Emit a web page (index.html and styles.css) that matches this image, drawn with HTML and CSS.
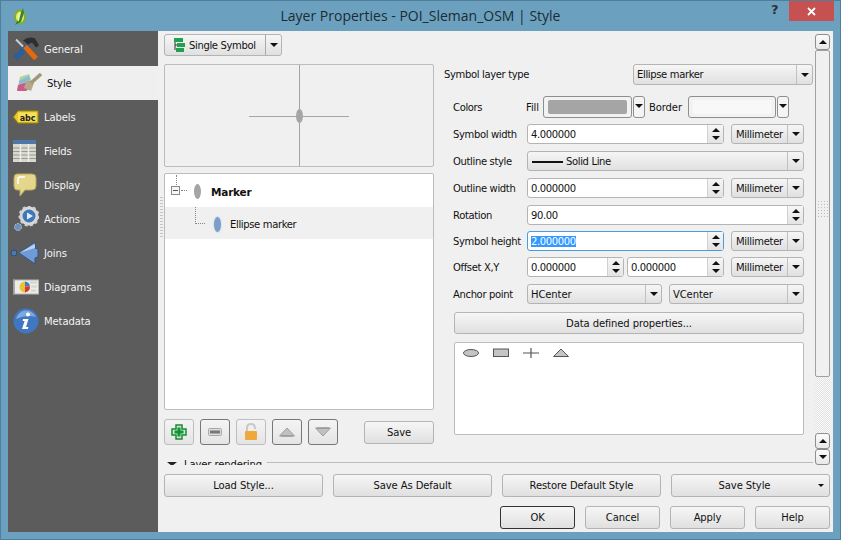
FILE: index.html
```html
<!DOCTYPE html>
<html lang="en">
<head>
  <meta charset="UTF-8">
  <title>Layer Properties - POI_Sleman_OSM | Style</title>
  <link rel="stylesheet" href="styles.css">
</head>
<body>
<div class="window">
  <div class="titlebar">
    <svg class="app-icon" width="16" height="20" viewBox="0 0 16 20"><ellipse cx="8" cy="10" rx="5" ry="6.5" fill="#e9ec6a" stroke="#8aa92e" stroke-width="2"/><path d="M11 1 L6 12 L3 18 L9 15 L12 6 Z" fill="#2f8a33"/><path d="M8 6 L6 14" stroke="#f3f5a0" stroke-width="1.5"/></svg>
    <div class="title">Layer Properties - POI_Sleman_OSM | Style</div>
    <div class="help">?</div>
    <div class="close"><svg width="9" height="9" viewBox="0 0 9 9"><path d="M1 1 L8 8 M8 1 L1 8" stroke="#fff" stroke-width="1.8"/></svg></div>
  </div>

  <div class="client">
    <div class="sidebar">
      <div class="nav-item">
        <svg class="nav-icon" width="26" height="25" viewBox="0 0 26 25"><path d="M1 1 L14 14" stroke="#d0d0d0" stroke-width="2"/><path d="M1 1 L3 3" stroke="#555" stroke-width="3"/><path d="M2 22 L16 8" stroke="#2b5f9c" stroke-width="5.5"/><path d="M12 10 L23 22" stroke="#e8680c" stroke-width="5"/><path d="M10 4 Q16 -1 22 2 L26 9 L23 11 L19 6 L15 8 Z" fill="#2e2e2e"/></svg>
        <span>General</span>
      </div>
      <div class="nav-item active">
        <svg class="nav-icon" width="26" height="20" viewBox="0 0 26 20"><path d="M1 18 L4 4 L13 1 L17 12 L10 18 Z" fill="#a8d49a"/><path d="M2 12 L14 8 L16 13 L10 18 L1 18 Z" fill="#c95c8a"/><path d="M3 8 L13 3 L14 7 L3 11 Z" fill="#8cb7dc"/><path d="M10 8 L18 10 L15 18 L8 15 Z" fill="#b3a88a"/><path d="M15 10 L25 1" stroke="#a09878" stroke-width="3.5"/></svg>
        <span>Style</span>
      </div>
      <div class="nav-item">
        <svg class="nav-icon" width="26" height="16" viewBox="0 0 26 16"><path d="M0.5 8 L5 2 H25 V14 H5 Z" fill="#eac926" stroke="#a58c10"/><rect x="5" y="3.5" width="18.5" height="9" fill="#f6e15a"/><text x="14.5" y="11.5" class="abc" text-anchor="middle">abc</text></svg>
        <span>Labels</span>
      </div>
      <div class="nav-item">
        <svg class="nav-icon" width="23" height="22" viewBox="0 0 23 22"><rect width="23" height="22" fill="#d8d8d0"/><rect width="23" height="4" fill="#4f78a8"/><path d="M0 8 H23 M0 11.5 H23 M0 15 H23 M0 18.5 H23" stroke="#9a9a90"/><path d="M7.5 4 V22 M15.5 4 V22" stroke="#f0f0ea" stroke-width="1.5"/></svg>
        <span>Fields</span>
      </div>
      <div class="nav-item">
        <svg class="nav-icon" width="24" height="24" viewBox="0 0 24 24"><path d="M4 1 H19 Q23 1 23 5 V13 Q23 17 19 17 H12 L7 23 V17 H4 Q1 17 1 13 V5 Q1 1 4 1 Z" fill="#e4d78c" stroke="#b8a85c"/><path d="M5 11 V6 Q5 4 7 4 H12" stroke="#fff" stroke-width="1.5" fill="none"/></svg>
        <span>Display</span>
      </div>
      <div class="nav-item">
        <svg class="nav-icon" width="26" height="26" viewBox="0 0 26 26"><circle cx="16" cy="10" r="8" fill="#3f78b8" stroke="#d8d8d8" stroke-width="3"/><circle cx="16" cy="10" r="9.5" fill="none" stroke="#cfcfcf" stroke-width="2" stroke-dasharray="3 2.4"/><path d="M14 6.5 L20 10 L14 13.5 Z" fill="#e8eef6"/><circle cx="5" cy="21" r="3.5" fill="#6f90b8" stroke="#b8c4d0" stroke-dasharray="2 1"/></svg>
        <span>Actions</span>
      </div>
      <div class="nav-item">
        <svg class="nav-icon wide" width="29" height="24" viewBox="0 0 29 24"><circle cx="4" cy="12" r="3" fill="#4a78b0" stroke="#2c4c78"/><path d="M9 12 L25 1 V7 L28 8 V16 L25 17 V23 Z" fill="#6f9ad6" stroke="#30547f"/><path d="M9 12 L25 7 V3 Z" fill="#b8d2f0"/></svg>
        <span>Joins</span>
      </div>
      <div class="nav-item">
        <svg class="nav-icon" width="26" height="17" viewBox="0 0 26 17"><rect x="0.5" y="1.5" width="25" height="14" fill="#ecece8" stroke="#b4b4ac"/><path d="M1 1 V16" stroke="#9a9a92" stroke-width="1.5"/><path d="M17 4 H24 M18 8 H24 M18 12 H23" stroke="#d4d4cc" stroke-width="2"/><path d="M12 3 A5.5 5.5 0 0 0 12 14 Z" fill="#e8c534"/><path d="M12 3 A5.5 5.5 0 0 1 17 8 H12 Z" fill="#4a78c0"/><path d="M12 8 H17 A5.5 5.5 0 0 1 12 14 Z" fill="#d6382c"/></svg>
        <span>Diagrams</span>
      </div>
      <div class="nav-item">
        <svg class="nav-icon" width="26" height="26" viewBox="0 0 26 26"><circle cx="13" cy="13" r="12.5" fill="#3f78c0"/><path d="M3 11 A10.5 10.5 0 0 1 23 9 Q13 6 3 11 Z" fill="#7ea8de"/><circle cx="15" cy="6.5" r="2" fill="#fff"/><path d="M10 11 H15.5 L13 19 H15.5 L14.8 21 H9 L11.6 13 H9.6 Z" fill="#fff"/></svg>
        <span>Metadata</span>
      </div>
    </div>

    <div class="main">
      <div class="splitter-dots"></div>
      <div class="scroll-area">
        <div class="scroll-content">
          <div class="columns">
            <div class="col-left">
              <div class="split-button">
                <div class="split-main">
                  <svg width="12" height="14" viewBox="0 0 12 14"><path d="M2 2 V12 M2 7 H6" stroke="#333"/><rect x="1" y="0" width="9" height="4" fill="#22a050"/><rect x="4" y="5" width="8" height="4" fill="#22a050"/><rect x="3" y="10" width="8" height="4" fill="#22a050"/></svg>
                  <span class="tight">Single Symbol</span>
                </div>
                <div class="split-arrow"><i class="caret"></i></div>
              </div>
              <div class="preview">
                <div class="cross-v"></div>
                <div class="cross-h"></div>
                <div class="dot"></div>
              </div>
              <div class="tree">
                <div class="tree-row">
                  <i class="dots-top"></i>
                  <i class="minus"></i>
                  <i class="dots-short"></i>
                  <i class="mark grey"></i>
                  <b>Marker</b>
                </div>
                <div class="tree-row sub">
                  <i class="dots-corner"></i>
                  <i class="mark blue"></i>
                  <span class="tight">Ellipse marker</span>
                </div>
              </div>
              <div class="tools">
                <button class="tool"><svg width="16" height="16" viewBox="0 0 16 16"><path d="M5 1 H11 V5 H15 V11 H11 V15 H5 V11 H1 V5 H5 Z" fill="#c8eccc" stroke="#1c8a30" stroke-width="1.5"/><path d="M8 3.5 V12.5 M3.5 8 H12.5" stroke="#12903a" stroke-width="3"/></svg></button>
                <button class="tool dark"><svg width="14" height="10" viewBox="0 0 14 10"><rect x="0.5" y="1.5" width="13" height="7" rx="1" fill="#dcdcdc" stroke="#a8a8a8"/><rect x="2" y="3.5" width="10" height="3" fill="#777"/></svg></button>
                <button class="tool"><svg width="14" height="18" viewBox="0 0 14 18"><path d="M3 8 V5 Q3 1 7 1 Q11 1 11 5 V6" fill="none" stroke="#c8c8c8" stroke-width="2"/><rect x="1" y="8" width="12" height="9" rx="1" fill="#eea83c"/></svg></button>
                <button class="tool dark"><svg width="18" height="10" viewBox="0 0 18 10"><path d="M9 1 L16.5 9 H1.5 Z" fill="#c0c0c0" stroke="#a0a0a0"/><path d="M3 9 H15" stroke="#888"/></svg></button>
                <button class="tool dark"><svg width="18" height="10" viewBox="0 0 18 10"><path d="M9 9 L16.5 1 H1.5 Z" fill="#c0c0c0" stroke="#a0a0a0"/><path d="M3 1 H15" stroke="#888"/></svg></button>
                <button class="btn tool-save">Save</button>
              </div>
            </div>

            <div class="col-right">
              <div class="type-row">
                <span class="tight">Symbol layer type</span>
                <div class="combo type-combo"><span class="tight">Ellipse marker</span><div class="combo-arrow"><i class="caret"></i></div></div>
              </div>
              <div class="form">
                <label class="colors-label">Colors</label>
                <div class="field colors">
                  <span class="fill-label">Fill</span>
                  <div class="color-btn"><div class="swatch grey"></div></div>
                  <div class="color-arrow"><i class="caret"></i></div>
                  <span class="border-label">Border</span>
                  <div class="color-btn border"><div class="swatch pale"></div></div>
                  <div class="color-arrow"><i class="caret"></i></div>
                </div>

                <label>Symbol width</label>
                <div class="field">
                  <div class="spin"><span>4.000000</span><div class="spin-btns"><i class="up"></i><i class="down"></i></div></div>
                  <div class="combo unit"><span>Millimeter</span><div class="combo-arrow"><i class="caret"></i></div></div>
                </div>

                <label>Outline style</label>
                <div class="field">
                  <div class="combo grow"><i class="solid-line"></i><span class="tight">Solid Line</span><div class="combo-arrow"><i class="caret"></i></div></div>
                </div>

                <label>Outline width</label>
                <div class="field">
                  <div class="spin"><span>0.000000</span><div class="spin-btns"><i class="up"></i><i class="down"></i></div></div>
                  <div class="combo unit"><span>Millimeter</span><div class="combo-arrow"><i class="caret"></i></div></div>
                </div>

                <label>Rotation</label>
                <div class="field">
                  <div class="spin"><span>90.00</span><div class="spin-btns"><i class="up"></i><i class="down"></i></div></div>
                </div>

                <label>Symbol height</label>
                <div class="field">
                  <div class="spin focused"><span><em>2.000000</em></span><div class="spin-btns"><i class="up"></i><i class="down"></i></div></div>
                  <div class="combo unit"><span>Millimeter</span><div class="combo-arrow"><i class="caret"></i></div></div>
                </div>

                <label>Offset X,Y</label>
                <div class="field offset">
                  <div class="spin"><span>0.000000</span><div class="spin-btns"><i class="up"></i><i class="down"></i></div></div>
                  <div class="spin"><span>0.000000</span><div class="spin-btns"><i class="up"></i><i class="down"></i></div></div>
                  <div class="combo unit"><span>Millimeter</span><div class="combo-arrow"><i class="caret"></i></div></div>
                </div>

                <label>Anchor point</label>
                <div class="field">
                  <div class="combo half"><span>HCenter</span><div class="combo-arrow"><i class="caret"></i></div></div>
                  <div class="combo half"><span>VCenter</span><div class="combo-arrow"><i class="caret"></i></div></div>
                </div>

                <button class="btn data-defined">Data defined properties...</button>

                <div class="shapes">
                  <svg width="112" height="14" viewBox="0 0 112 14"><ellipse cx="8" cy="7" rx="7.5" ry="3.5" fill="#c4c4c4" stroke="#555"/><rect x="30.5" y="3" width="15" height="7.5" fill="#c4c4c4" stroke="#555"/><path d="M60 7 H76 M68 2 V12" stroke="#555" stroke-width="1.2"/><path d="M90.5 10.5 L98 3 L105.5 10.5 Z" fill="#c4c4c4" stroke="#555"/></svg>
                </div>
              </div>
            </div>
          </div>

          <div class="rendering">
            <i class="rendering-arrow"></i>
            <span>Layer rendering</span>
            <i class="rendering-line"></i>
          </div>
        </div>

        <div class="scrollbar">
          <div class="sb-btn"><i class="up"></i></div>
          <div class="sb-handle"><div class="grip"></div></div>
          <div class="sb-trough"></div>
          <div class="sb-btn"><i class="up"></i></div>
          <div class="sb-btn"><i class="down"></i></div>
        </div>
      </div>

      <div class="actions">
        <button class="btn">Load Style...</button>
        <button class="btn">Save As Default</button>
        <button class="btn">Restore Default Style</button>
        <button class="btn menu">Save Style<i class="caret small"></i></button>
      </div>
      <div class="dialog-buttons">
        <button class="btn default">OK</button>
        <button class="btn">Cancel</button>
        <button class="btn">Apply</button>
        <button class="btn">Help</button>
      </div>
    </div>
  </div>
</div>
</body>
</html>
```

FILE: styles.css
```css
* {
  box-sizing: border-box;
}

html, body {
  margin: 0;
  padding: 0;
}

body {
  width: 841px;
  height: 540px;
  overflow: hidden;
  font-family: "DejaVu Sans", sans-serif;
  font-size: 10px;
  letter-spacing: -0.1px;
  color: #111;
}

i {
  display: block;
  font-style: normal;
}

.tight {
  letter-spacing: -0.35px;
}

.window {
  width: 841px;
  height: 540px;
  background: #6ba1be;
  border: 1px solid #4f7f9b;
  display: flex;
  flex-direction: column;
}

.titlebar {
  height: 30px;
  display: flex;
  align-items: flex-start;
  position: relative;
  flex-shrink: 0;
}

.app-icon {
  margin: 6px 0 0 11px;
}

.title {
  position: absolute;
  left: 0;
  right: 0;
  top: 5px;
  text-align: center;
  font-family: "Open Sans", sans-serif;
  font-size: 14px;
  letter-spacing: 0;
  color: #1d2b33;
}

.help {
  position: absolute;
  left: 770px;
  top: 1px;
  font-family: "DejaVu Sans", sans-serif;
  font-weight: bold;
  font-size: 13px;
  color: #2b3238;
}

.close {
  position: absolute;
  left: 788px;
  top: 0;
  width: 45px;
  height: 20px;
  background: #c75050;
  display: flex;
  align-items: center;
  justify-content: center;
}

.client {
  margin: 0 7px 7px 7px;
  height: 501px;
  display: flex;
}

/* left navigation */
.sidebar {
  width: 150px;
  padding-top: 1px;
  background: #5c5c5c;
  flex-shrink: 0;
}

.nav-item {
  height: 34px;
  position: relative;
  display: flex;
  align-items: center;
  padding-left: 36px;
  color: #f4f4f4;
}

.nav-item.active {
  background: #efefef;
  color: #111;
  padding-left: 39px;
}

.nav-icon {
  position: absolute;
  left: 5px;
  top: 50%;
  transform: translateY(-50%);
}

.nav-item.active .nav-icon {
  left: 8px;
}

.nav-icon.wide {
  left: 2px;
}

.abc {
  font-family: "DejaVu Sans", sans-serif;
  font-weight: bold;
  font-size: 8px;
  fill: #222;
}

/* main panel */
.main {
  flex: 1;
  min-width: 0;
  background: #f0f0f0;
  display: flex;
  flex-direction: column;
  position: relative;
}

.splitter-dots {
  position: absolute;
  left: 2px;
  top: 166px;
  width: 3px;
  height: 40px;
  background: repeating-linear-gradient(to bottom, #c4c4c4 0 1px, transparent 1px 3px);
}

.scroll-area {
  height: 434px;
  overflow: hidden;
  display: flex;
  flex-shrink: 0;
}

.scroll-content {
  width: 655px;
  padding-left: 6px;
}

.columns {
  display: flex;
  gap: 10px;
  height: 426px;
  padding-top: 3px;
}

.col-left {
  width: 270px;
  display: flex;
  flex-direction: column;
}

.split-button {
  width: 118px;
  height: 22px;
  display: flex;
  border: 1px solid #b4b4b4;
  border-radius: 3px;
  background: linear-gradient(#f6f6f6, #e0e0e0);
}

.split-main {
  flex: 1;
  display: flex;
  align-items: center;
  gap: 4px;
  padding-left: 8px;
}

.split-arrow {
  width: 16px;
  border-left: 1px solid #a8a8a8;
  display: flex;
  align-items: center;
  justify-content: center;
}

.caret {
  width: 0;
  height: 0;
  border-left: 4px solid transparent;
  border-right: 4px solid transparent;
  border-top: 4px solid #111;
}

.caret.small {
  border-left-width: 3px;
  border-right-width: 3px;
  border-top-width: 3px;
}

.preview {
  margin-top: 8px;
  height: 103px;
  border: 1px solid #bcbcbc;
  border-radius: 2px;
  position: relative;
}

.cross-v {
  position: absolute;
  left: 134px;
  top: 0;
  bottom: 0;
  width: 1px;
  background: #a5a5a5;
}

.cross-h {
  position: absolute;
  left: 84px;
  top: 51px;
  width: 100px;
  height: 1px;
  background: #a5a5a5;
}

.dot {
  position: absolute;
  left: 131px;
  top: 44px;
  width: 7px;
  height: 14px;
  border-radius: 50%;
  background: #a5a5a5;
}

.tree {
  margin-top: 6px;
  height: 237px;
  border: 1px solid #bcbcbc;
  border-radius: 2px;
  background: #fff;
  position: relative;
}

.tree-row {
  height: 33px;
  padding-top: 2px;
  position: relative;
  display: flex;
  align-items: center;
  padding-left: 46px;
}

.tree-row b {
  font-size: 10.5px;
  letter-spacing: -0.2px;
}

.tree-row.sub {
  height: 32px;
  padding-top: 2px;
  background: #f0f0f0;
  padding-left: 65px;
}

.dots-top {
  position: absolute;
  left: 11px;
  top: 1px;
  height: 10px;
  border-left: 1px dotted #888;
}

.minus {
  position: absolute;
  left: 6px;
  top: 12px;
  width: 9px;
  height: 9px;
  border: 1px solid #8a8a8a;
  background: linear-gradient(#555, #555) center / 5px 1px no-repeat, #f6f6f6;
}

.dots-short {
  position: absolute;
  left: 16px;
  top: 16px;
  width: 6px;
  border-top: 1px dotted #888;
}

.dots-corner {
  position: absolute;
  left: 30px;
  top: 0;
  width: 10px;
  height: 17px;
  border-left: 1px dotted #888;
  border-bottom: 1px dotted #888;
}

.mark {
  position: absolute;
  width: 7px;
  height: 15px;
  border-radius: 50%;
}

.mark.grey {
  left: 29px;
  top: 10px;
  background: #a5a5a5;
}

.mark.blue {
  left: 49px;
  top: 10px;
  background: #7c9fc6;
  box-shadow: 0 0 1px 1px #d0e2f4;
}

.tools {
  margin-top: 9px;
  display: flex;
  align-items: center;
  gap: 6px;
  height: 26px;
}

.tool {
  width: 30px;
  height: 26px;
  padding: 0;
  border: 1px solid #bdbdbd;
  border-radius: 3px;
  background: linear-gradient(#f4f4f4, #e4e4e4);
  display: flex;
  align-items: center;
  justify-content: center;
}

.tool.dark {
  border-color: #777;
}

.btn {
  height: 23px;
  padding: 0;
  border: 1px solid #b4b4b4;
  border-radius: 3px;
  background: linear-gradient(#f6f6f6, #e0e0e0);
  font-family: "DejaVu Sans", sans-serif;
  font-size: 10px;
  letter-spacing: -0.1px;
  color: #111;
}

.tool-save {
  width: 70px;
  margin-left: 20px;
}

.col-right {
  width: 369px;
  padding-top: 30px;
}

.type-row {
  height: 21px;
  display: flex;
  align-items: center;
  justify-content: space-between;
}

.combo {
  height: 20px;
  display: flex;
  align-items: center;
  position: relative;
  padding-left: 3px;
  border: 1px solid #b4b4b4;
  border-radius: 3px;
  background: linear-gradient(#f6f6f6, #e0e0e0);
}

.type-combo {
  width: 180px;
  height: 21px;
}

.combo-arrow {
  position: absolute;
  right: 0;
  top: 0;
  bottom: 0;
  width: 16px;
  border-left: 1px solid #c0c0c0;
  display: flex;
  align-items: center;
  justify-content: center;
}

.form {
  margin: 11px 9px 0 9px;
  width: 351px;
  display: grid;
  grid-template-columns: 74px 277px;
  grid-template-rows: 28px 27px 27px 27px 26px 26px 27px 28px 30px 93px;
  align-items: start;
}

.form label {
  height: 20px;
  display: flex;
  align-items: center;
  white-space: nowrap;
  letter-spacing: -0.35px;
}

.form .colors-label {
  height: 22px;
}

.field {
  display: flex;
  gap: 7px;
  height: 20px;
}

.colors {
  height: 22px;
  gap: 0;
  align-items: center;
}

.fill-label {
  width: 17px;
  margin-left: -1px;
}

.color-btn {
  width: 89px;
  height: 22px;
  padding: 3px 4px;
  border: 1px solid #8e8e8e;
  border-radius: 3px;
  background: #f2f2f2;
}

.color-btn.border {
  width: 88px;
}

.swatch {
  height: 100%;
  border-radius: 2px;
}

.swatch.grey {
  background: #a5a5a5;
}

.swatch.pale {
  background: #f8f8f8;
}

.color-arrow {
  width: 12px;
  height: 22px;
  border: 1px solid #8e8e8e;
  border-radius: 3px;
  background: #f4f4f4;
  display: flex;
  justify-content: center;
  padding-top: 7px;
  margin-left: 1px;
}

.border-label {
  width: 39px;
  margin-left: 4px;
}

.spin {
  flex: 1;
  min-width: 0;
  height: 20px;
  padding-left: 3px;
  display: flex;
  align-items: center;
  justify-content: space-between;
  border: 1px solid #b4b4b4;
  border-radius: 3px;
  background: #fff;
  letter-spacing: -0.36px;
}

.spin.focused {
  border: 1px solid #4a9be0;
}

.spin em {
  font-style: normal;
  background: #3399ff;
  color: #fff;
}

.spin-btns {
  width: 16px;
  height: 100%;
  display: flex;
  flex-direction: column;
  align-items: center;
  justify-content: space-evenly;
  border-left: 1px solid #d0d0d0;
  background: linear-gradient(#f6f6f6, #e4e4e4);
}

.up {
  width: 0;
  height: 0;
  border-left: 4px solid transparent;
  border-right: 4px solid transparent;
  border-bottom: 4px solid #111;
}

.down {
  width: 0;
  height: 0;
  border-left: 4px solid transparent;
  border-right: 4px solid transparent;
  border-top: 4px solid #111;
}

.unit {
  width: 73px;
  flex-shrink: 0;
  padding-left: 4px;
  letter-spacing: -0.3px;
}

.grow {
  flex: 1;
}

.half {
  flex: 1;
}

.solid-line {
  width: 31px;
  height: 1px;
  margin: 0 3px 0 1px;
  background: #111;
  box-shadow: 0 1px 0 #111;
}

.offset {
  gap: 3px;
}

.offset .unit {
  margin-left: 4px;
}

.data-defined {
  grid-column: 1 / -1;
  width: 350px;
  height: 22px;
  margin-left: 1px;
}

.shapes {
  grid-column: 1 / -1;
  width: 350px;
  height: 93px;
  margin-left: 1px;
  padding: 3px 0 0 8px;
  border: 1px solid #bcbcbc;
  border-radius: 2px;
  background: #fff;
}

.rendering {
  height: 12px;
  margin-top: 1px;
  display: flex;
  align-items: flex-start;
}

.rendering span {
  margin: 1px 0 0 7px;
}

.rendering-arrow {
  width: 0;
  height: 0;
  margin: 4px 0 0 3px;
  border-left: 5px solid transparent;
  border-right: 5px solid transparent;
  border-top: 4px solid #222;
}

.rendering-line {
  flex: 1;
  height: 1px;
  margin: 4px 0 0 5px;
  background: #bcbcbc;
}

.scrollbar {
  width: 15px;
  margin: 3px 3px 0 2px;
  height: 431px;
  flex-shrink: 0;
  display: flex;
  flex-direction: column;
}

.sb-btn {
  height: 16px;
  flex-shrink: 0;
  border: 1px solid #8e8e8e;
  border-radius: 3px;
  background: linear-gradient(#fbfbfb, #e8e8e8);
  display: flex;
  align-items: center;
  justify-content: center;
}

.sb-handle {
  height: 327px;
  flex-shrink: 0;
  border: 1px solid #a0a0a0;
  border-radius: 2px;
  background: #f0f0f0;
  display: flex;
  align-items: center;
  justify-content: center;
}

.grip {
  width: 11px;
  height: 18px;
  margin-bottom: 9px;
  background-image: radial-gradient(#bdbdbd 0.8px, transparent 0.9px);
  background-size: 3px 3px;
}

.sb-trough {
  flex: 1;
  background: repeating-conic-gradient(#e2e2e2 0 25%, #fafafa 0 50%) 0 0 / 2px 2px;
}

.actions {
  height: 23px;
  margin-top: 9px;
  padding-left: 6px;
  display: flex;
  gap: 10px;
}

.actions .btn {
  width: 159px;
  position: relative;
}

.actions .menu {
  padding-right: 12px;
}

.menu .caret {
  position: absolute;
  right: 5px;
  top: 9px;
}

.dialog-buttons {
  height: 23px;
  margin-top: 9px;
  padding-right: 3px;
  display: flex;
  justify-content: flex-end;
  gap: 10px;
}

.dialog-buttons .btn {
  width: 75px;
}

.dialog-buttons .default {
  border-color: #333;
}
```
